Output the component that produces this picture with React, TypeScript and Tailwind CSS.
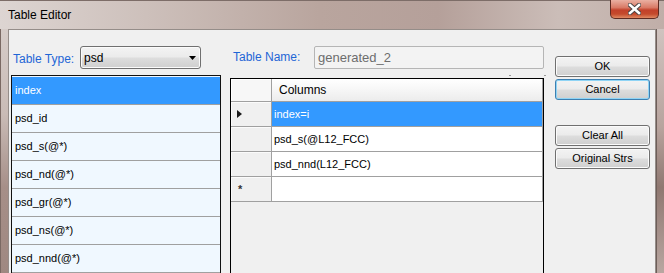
import React from 'react';

const listItems = ['index', 'psd_id', 'psd_s(@*)', 'psd_nd(@*)', 'psd_gr(@*)', 'psd_ns(@*)', 'psd_nnd(@*)'];

const gridRows = [
  { value: 'index=i', selected: true },
  { value: 'psd_s(@L12_FCC)', selected: false },
  { value: 'psd_nnd(L12_FCC)', selected: false },
];

const btn =
  'w-[95px] h-[21px] flex items-center justify-center rounded-[3px] border text-[11px] text-black bg-[linear-gradient(180deg,#f3f3f3_0%,#ebebeb_48%,#dddddd_52%,#cfcfcf_100%)]';

const WinButton: React.FC<{ label: string; focused?: boolean; className?: string }> = ({ label, focused, className }) => (
  <button
    className={`${btn} ${
      focused
        ? 'border-[#3c7fb1] shadow-[inset_0_0_0_1px_#8fd4f5]'
        : 'border-[#707070] shadow-[inset_0_0_0_1px_#fbfbfb]'
    } ${className ?? ''}`}
  >
    {label}
  </button>
);

const App: React.FC = () => {
  return (
    <div className="w-[664px] h-[273px] overflow-hidden flex flex-col font-['Liberation_Sans',Arial,sans-serif] bg-[linear-gradient(90deg,#ddd5d2_0%,#cdc0bb_22%,#b9a59e_48%,#b5a09a_66%,#cbbdb8_84%,#c0aea8_100%)]">
      {/* title bar */}
      <div className="h-[29px] flex justify-between shrink-0 border-t border-[#7d6d68]">
        <span className="pl-[8px] pt-[7px] text-[12px] text-black leading-[14px]">Table Editor</span>
        <div className="mr-[5px] w-[49px] h-[19px] -mt-px flex items-center justify-center rounded-b-[5px] border border-t-0 border-[#5e2b22] bg-[linear-gradient(180deg,#eab0a2_0%,#d97a66_42%,#c2412a_56%,#c44a2c_78%,#e08a63_100%)]">
          <svg width="13" height="12" viewBox="0 0 13 12">
            <path d="M2 2 L11 10 M11 2 L2 10" stroke="#4a4444" strokeWidth="4.4" strokeLinecap="square" />
            <path d="M2 2 L11 10 M11 2 L2 10" stroke="#ffffff" strokeWidth="2.6" strokeLinecap="square" />
          </svg>
        </div>
      </div>

      <div className="flex-1 flex">
        <div className="w-[8px] border-l border-[#7a6963] bg-[linear-gradient(180deg,#d6ccc8_0%,#c9bbb6_35%,#a68f88_65%,#9f8881_100%)]" />

        {/* client area */}
        <div className="flex-1 flex bg-[#f0f0f0] border-t border-l border-r border-[#958d89] pl-[2px]">
          {/* left column */}
          <div className="w-[210px] flex flex-col">
            <div className="mt-[16px] h-[23px] flex items-center">
              <span className="w-[69px] pl-[2px] pt-[2px] text-[12px] text-[#1f66d6]">Table Type:</span>
              <div className="w-[121px] h-[23px] flex items-center justify-between pl-[3px] pr-[4px] rounded-[3px] border border-[#707070] shadow-[inset_0_0_0_1px_#fbfbfb] bg-[linear-gradient(180deg,#f3f3f3_0%,#ebebeb_48%,#dddddd_52%,#cfcfcf_100%)]">
                <span className="text-[12px] text-black">psd</span>
                <svg width="7" height="4" viewBox="0 0 7 4">
                  <path d="M0 0 L7 0 L3.5 4 Z" fill="#000" />
                </svg>
              </div>
            </div>
            <div className="mt-[6px] flex-1 border border-[#111] border-b-0 bg-[#f0f8ff] pt-px">
              {listItems.map((item, i) => (
                <div
                  key={item}
                  className={`h-[28px] flex items-center pl-[3px] border-b border-[#a0a0a0] text-[11px] ${
                    i === 0 ? 'bg-[#3399ff] text-white' : 'text-black'
                  }`}
                >
                  {item}
                </div>
              ))}
            </div>
          </div>

          {/* middle column */}
          <div className="w-[314px] ml-[9px] flex flex-col">
            <div className="mt-[16px] h-[23px] flex items-center">
              <span className="w-[84px] pl-[3px] -mt-[2px] text-[12px] text-[#1f66d6]">Table Name:</span>
              <div className="w-[230px] h-[23px] flex items-center pl-[3px] rounded-[2px] border border-[#b5b5b5] bg-[#f3f3f3] text-[13px] text-[#6d6d6d]">
                generated_2
              </div>
            </div>
            <div className="h-[9px] flex items-start pt-[6px]">
              <span className="ml-[279px] w-[2px] h-px bg-[#9a9a9a]" />
              <span className="ml-auto mr-[-2px] w-[2px] h-px bg-[#9a9a9a]" />
            </div>
            <div className="flex-1 border border-black border-b-0 bg-[#f0f0f0]">
              {/* header */}
              <div className="flex h-[23px] border-b border-[#a0a0a0]">
                <div className="w-[41px] border-r border-[#a0a0a0] bg-[#f7f7f7] shadow-[inset_1px_1px_0_#ffffff]" />
                <div className="w-[271px] flex items-center pl-[7px] border-r border-[#a0a0a0] text-[12px] text-black bg-[linear-gradient(180deg,#ffffff_0%,#f8f8f8_40%,#ececec_100%)]">
                  Columns
                </div>
              </div>
              {gridRows.map((row) => (
                <div key={row.value} className="flex h-[25px] border-b border-[#a0a0a0]">
                  <div className="w-[41px] flex items-center pl-[6px] border-r border-[#a0a0a0] bg-[#f0f0f0] shadow-[inset_1px_1px_0_#fbfbfb]">
                    {row.selected && (
                      <svg width="5" height="8" viewBox="0 0 5 8">
                        <path d="M0 0 L5 4 L0 8 Z" fill="#1a1a1a" />
                      </svg>
                    )}
                  </div>
                  <div
                    className={`w-[271px] flex items-center pl-[2px] border-r border-[#a0a0a0] text-[11px] ${
                      row.selected ? 'bg-[#3399ff] text-white' : 'bg-white text-black'
                    }`}
                  >
                    {row.value}
                  </div>
                </div>
              ))}
              <div className="flex h-[25px] border-b border-[#a0a0a0]">
                <div className="w-[41px] flex items-center pl-[7px] border-r border-[#a0a0a0] bg-[#f0f0f0] shadow-[inset_1px_1px_0_#fbfbfb] text-[11px] text-[#333] font-bold">
                  *
                </div>
                <div className="w-[271px] border-r border-[#a0a0a0] bg-white" />
              </div>
            </div>
          </div>

          {/* buttons */}
          <div className="ml-[11px] flex flex-col">
            <WinButton label="OK" className="mt-[26px]" />
            <WinButton label="Cancel" focused className="mt-[2px]" />
            <WinButton label="Clear All" className="mt-[25px]" />
            <WinButton label="Original Strs" className="mt-[2px]" />
          </div>
        </div>

        <div className="w-[8px] border-l border-[#6d5e59] bg-[linear-gradient(180deg,#cfc3bf_0%,#b8a49e_40%,#8f7871_65%,#b9a7a1_100%)]" />
      </div>
    </div>
  );
};

export default App;
